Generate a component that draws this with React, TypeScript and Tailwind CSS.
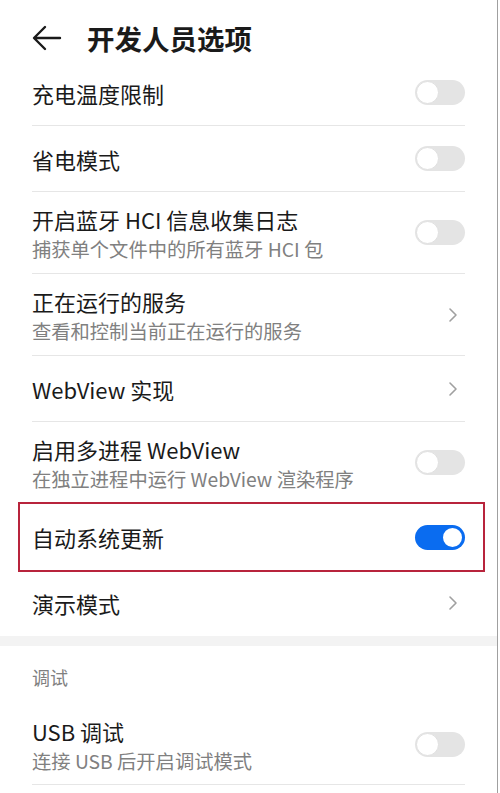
import { ChevronRight } from "lucide-react";

type Item = {
  title: string;
  sub?: string;
  kind: "toggle" | "chevron";
  on?: boolean;
  marked?: boolean;
};

const items: Item[] = [
  { title: "充电温度限制", kind: "toggle" },
  { title: "省电模式", kind: "toggle" },
  { title: "开启蓝牙 HCI 信息收集日志", sub: "捕获单个文件中的所有蓝牙 HCI 包", kind: "toggle" },
  { title: "正在运行的服务", sub: "查看和控制当前正在运行的服务", kind: "chevron" },
  { title: "WebView 实现", kind: "chevron" },
  { title: "启用多进程 WebView", sub: "在独立进程中运行 WebView 渲染程序", kind: "toggle" },
  { title: "自动系统更新", kind: "toggle", on: true, marked: true },
  { title: "演示模式", kind: "chevron" },
];

function Toggle({ on }: { on?: boolean }) {
  if (on) {
    return (
      <div className="w-[50px] h-[25px] rounded-full bg-[#0a6cf0] flex items-center justify-end pr-[1px]">
        <div className="w-[23px] h-[23px] rounded-full bg-white border-[2px] border-[#0a6cf0]" />
      </div>
    );
  }
  return (
    <div className="w-[50px] h-[25px] rounded-full bg-[#e4e4e4] flex items-center pl-[1px]">
      <div className="w-[23px] h-[23px] rounded-full bg-white border border-[#e0e0e0]" />
    </div>
  );
}

function Row({ item, last }: { item: Item; last?: boolean }) {
  const single = !item.sub;
  return (
    <div className="relative">
      {item.marked && (
        <div className="absolute left-[18px] right-[12px] top-[-2px] bottom-[-2px] border-[2px] border-[#b8243c] pointer-events-none" />
      )}
      <div
        className={`mx-[32px] flex items-center justify-between ${
          single ? "h-[66px]" : "h-[82px]"
        } ${last || item.marked ? "" : "border-b border-[#e6e6e6]"}`}
      >
        <div className="flex flex-col">
          <span className="text-[22px] leading-[30px] text-[#1a1a1a]">{item.title}</span>
          {item.sub && (
            <span className="text-[19.3px] leading-[26px] text-[#808080] mt-[2px]">{item.sub}</span>
          )}
        </div>
        {item.kind === "toggle" ? (
          <Toggle on={item.on} />
        ) : (
          <ChevronRight className="w-[24px] h-[24px] text-[#a0a0a0]" strokeWidth={1.6} />
        )}
      </div>
    </div>
  );
}

export default function App() {
  return (
    <div
      className="w-[500px] h-[793px] overflow-hidden bg-white"
      style={{ fontFamily: '"Noto Sans CJK SC", "Noto Sans", sans-serif' }}
    >
      <div className="w-[498px] h-full border-r border-[#a0a0a0] bg-white">
        {/* header */}
        <div className="h-[60px] pt-[16px] flex items-center">
          <svg
            className="ml-[32px] w-[30px] h-[26px]"
            viewBox="0 0 30 26"
            fill="none"
            stroke="#1a1a1a"
            strokeWidth="2.4"
            strokeLinecap="round"
            strokeLinejoin="round"
          >
            <path d="M28 13H3M13 2L2 13l11 11" />
          </svg>
          <span className="ml-[25px] text-[27.5px] leading-[44px] font-bold text-[#1a1a1a]">
            开发人员选项
          </span>
        </div>

        {items.map((it, i) => (
          <Row key={i} item={it} last={i === items.length - 1} />
        ))}

        {/* section gap */}
        <div className="h-[10px] bg-[#f3f3f3]" />

        <div className="h-[59px] mx-[32px] flex items-center pt-[4px]">
          <span className="text-[18px] text-[#808080]">调试</span>
        </div>

        <div className="mx-[32px] h-[80px] flex items-center justify-between border-b border-[#e6e6e6]">
          <div className="flex flex-col">
            <span className="text-[22px] leading-[30px] text-[#1a1a1a]">USB 调试</span>
            <span className="text-[19.3px] leading-[26px] text-[#808080] mt-[2px]">连接 USB 后开启调试模式</span>
          </div>
          <Toggle />
        </div>
      </div>
    </div>
  );
}
